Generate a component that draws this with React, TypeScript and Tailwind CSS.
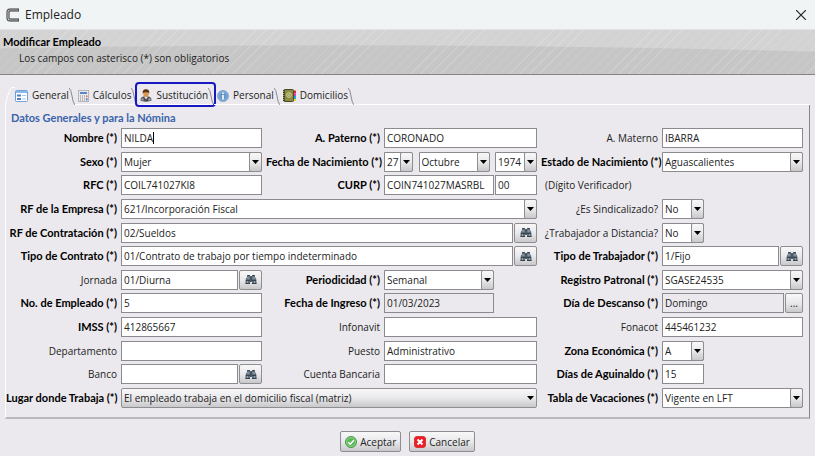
import type { ReactNode } from "react";
import { clsx } from "clsx";

const raised = "border border-[#8e8e90] rounded-xs bg-linear-to-b from-[#f8f8f9] via-[#e9e8ea] to-[#c9c8cb]";
const box = "h-5 w-full min-w-0 border border-[#8b8a8e] pl-[2px] text-[#222] outline-none";
const strong = "font-['Lato',sans-serif] text-[11px] font-bold";

type FieldProps = { id: string; value?: string; className?: string; readOnly?: boolean };

function TextBox({ id, value = "", className, readOnly }: FieldProps) {
  return (
    <input
      id={id}
      type="text"
      defaultValue={value}
      readOnly={readOnly}
      className={clsx(box, readOnly ? "bg-[#ebe9ed]" : "bg-white", className)}
    />
  );
}

function Combo({ id, value = "", className, flat, label }: FieldProps & { flat?: boolean; label?: string }) {
  return (
    <div className={clsx("relative h-5 min-w-0", className)}>
      <select
        id={id}
        aria-label={label}
        defaultValue={value}
        className={clsx(
          "h-5 w-full appearance-none pl-[2px] text-[#222] outline-none",
          flat ? raised : "border border-[#8b8a8e] bg-white rounded-r-xs",
        )}
      >
        <option>{value}</option>
      </select>
      <span
        className={clsx(
          "pointer-events-none absolute inset-y-0 right-0 flex w-[13px] items-center justify-center",
          !flat && raised,
        )}
      >
        <svg width="7" height="4" viewBox="0 0 7 4" className="shrink-0"><path d="M0 0h7L3.500 4z" fill="#000" /></svg>
      </span>
    </div>
  );
}

const Binoculars = () => (
  <svg width="12" height="11" viewBox="0 0 12 11">
    <path d="M2 1h3v1h2V1h3v2l1 1.500.5 2V10H7V8H5v2H.5V6.500l.5-2L2 3z" fill="#5f6e7b" />
    <path d="M2.500 1h2v1h-2zM7.500 1h2v1h-2z" fill="#3a444e" />
    <path d="M5.500 2.500h1V7.500h-1z" fill="#333c45" />
    <path d="M2 4h2.500M7.500 4H10" stroke="#a3b2bf" />
    <path d="M.5 9.500H5M7 9.500h4.500M1 6.500h4M7 6.500h4" stroke="#36414b" />
    <path d="M2.500 7v2M9.500 7v2" stroke="#93a2af" />
  </svg>
);

function Lookup({ id, value, children }: { id: string; value?: string; children?: ReactNode }) {
  return (
    <div className="flex w-full gap-px">
      <TextBox id={id} value={value} readOnly={!!children} />
      <button
        type="button"
        aria-label="Buscar"
        className={clsx(raised, "flex h-5 shrink-0 items-center justify-center", children ? "w-[18px]" : "w-[23px]")}
      >
        {children ?? <Binoculars />}
      </button>
    </div>
  );
}

function Label({ htmlFor, children, optional }: { htmlFor: string; children: ReactNode; optional?: boolean }) {
  return (
    <label htmlFor={htmlFor} className={clsx("text-right whitespace-nowrap", !optional && [strong, "text-black"])}>
      {children}
    </label>
  );
}

const FormIcon = () => (
  <svg width="13" height="12" viewBox="0 0 13 12">
    <rect x=".5" y=".5" width="12" height="11" rx="1" fill="#fff" stroke="#6f9fd8" />
    <path d="M1 1h11v2H1z" fill="#8db9ea" />
    <path d="M2 4.500h4v2H2zM2 8h4v2H2z" fill="#4f82c9" />
    <path d="M7 5.500h4M7 9h4" stroke="#a9c6ea" />
  </svg>
);

const CalcIcon = () => (
  <svg width="11" height="12" viewBox="0 0 11 12">
    <rect x=".5" y=".5" width="10" height="11" fill="#e9e9ea" stroke="#b5b5b8" />
    <path d="M2 2h7v2H2z" fill="#5c86c4" />
    <path d="M2 6h5M2 8h5M2 10h5" stroke="#8d8d92" strokeDasharray="1 1" />
    <path d="M8 5.500h1.500V7H8z" fill="#dd6a50" />
    <path d="M8 8h1.500v2.500H8z" fill="#5c86c4" />
  </svg>
);

const UserIcon = () => (
  <svg width="12" height="13" viewBox="0 0 12 13">
    <path d="M.5 11.500C.5 8 2.500 7.200 6 7.200s5.500.8 5.500 4.300c-2 1.500-9 1.500-11 0z" fill="#4b4d52" />
    <path d="M4 7.500h4L6 10.500z" fill="#e8e8e8" />
    <path d="M1 10.500l2-2 1 3H1zM11 10.500l-2-2-1 3h3z" fill="#9b9da1" />
    <ellipse cx="6" cy="4.700" rx="2.700" ry="3.200" fill="#d9974f" />
    <path d="M2.800 4.700C2.300 1.500 3.900.3 6 .3s3.700 1.200 3.200 4.400C8.500 3.300 7.500 3.500 6 3.300 4.500 3.500 3.500 3.300 2.800 4.700z" fill="#5a3213" />
  </svg>
);

const InfoIcon = () => (
  <svg width="12" height="12" viewBox="0 0 12 12">
    <circle cx="6" cy="6" r="5.500" fill="#6597c9" stroke="#86abd0" />
    <circle cx="6" cy="6" r="4.200" fill="none" stroke="#a9c8e6" strokeWidth=".6" />
    <path d="M5.200 2.500h1.600V4H5.200zM5.200 5h1.600v4.500H5.200z" fill="#fff" />
  </svg>
);

const BookIcon = () => (
  <svg width="13" height="13" viewBox="0 0 13 13">
    <path d="M10.500 1.500H13v3h-2.500z" fill="#e32832" />
    <path d="M10.500 4.500H13v2.500h-2.500z" fill="#d63fc2" />
    <path d="M10.500 7H13v3h-2.500z" fill="#27a6dc" />
    <path d="M10.500 10H13v2h-2.500z" fill="#f2d53b" />
    <rect x="1" y=".5" width="9.500" height="12" rx="1" fill="#8a8a45" stroke="#4b4a22" />
    <path d="M1 1v11" stroke="#3e3d22" strokeWidth="2" strokeDasharray="1 1" />
    <circle cx="6" cy="6" r="2.300" fill="none" stroke="#dcd793" />
    <circle cx="6" cy="6" r=".8" fill="#f0ebb5" />
  </svg>
);

const tabs = [
  { name: "General", icon: <FormIcon /> },
  { name: "Cálculos", icon: <CalcIcon /> },
  { name: "Sustitución", icon: <UserIcon />, marked: true },
  { name: "Personal", icon: <InfoIcon /> },
  { name: "Domicilios", icon: <BookIcon /> },
];

export default function App() {
  return (
    <div className="flex min-h-screen flex-col bg-[#ebe9ed] font-['Open_Sans','Noto_Sans',sans-serif] text-[10px] leading-4 text-[#222]">
      {/* Title bar */}
      <header className="flex h-[29px] items-center justify-between bg-[#f0f4f5] pr-2 pl-1.5">
        <div className="flex items-center gap-[5px]">
          <svg width="14" height="16" viewBox="0 0 14 16">
            <path d="M13 3H4Q2 3 2 5v6q0 2 2 2h9" fill="none" stroke="#333" strokeWidth="3" />
            <path d="M12.500 3H4Q2 3 2 5v6q0 2 2 2h8.500" fill="none" stroke="#c4c4c4" strokeWidth="1.200" />
          </svg>
          <span className="text-[12px]">Empleado</span>
        </div>
        <button type="button" aria-label="Cerrar" className="p-px">
          <svg width="10" height="10" viewBox="0 0 10 10"><path d="M0 0l10 10M10 0L0 10" stroke="#222" strokeWidth="1.200" /></svg>
        </button>
      </header>

      {/* Banner */}
      <section className="relative border-t border-b border-t-[#e2e2e3] border-b-[#858585] bg-[#d3d3d3] pt-1 pb-2">
        <svg className="absolute inset-0 h-full w-full" viewBox="0 0 815 45" preserveAspectRatio="none">
          <path d="M0 19Q400 11 815 22V45H0z" fill="#c6c6c6" />
        </svg>
        <div className="absolute inset-0 bg-[repeating-linear-gradient(135deg,transparent_0px,transparent_6px,#ffffff24_6px,#ffffff24_7px)]" />
        <h1 className={clsx(strong, "relative pl-[3px] text-black")}>Modificar Empleado</h1>
        <p className="relative pl-[19px]">Los campos con asterisco (*) son obligatorios</p>
      </section>

      {/* Tabs */}
      <nav role="tablist" className="mt-3 flex h-[18px] pl-[5px]">
        {tabs.map((tab, i) => (
          <button
            key={tab.name}
            type="button"
            role="tab"
            aria-selected={i === 0}
            className={clsx("relative flex items-center gap-1 whitespace-nowrap", i === 0 ? "pl-[10px]" : "border-b border-white pl-[3px]")}
          >
            {i === 0 && (
              <svg className="absolute top-0 left-0" width="10" height="18" viewBox="0 0 10 18">
                <path d="M.5 18Q4 1 7 .5h3" fill="none" stroke="#fff" />
              </svg>
            )}
            {tab.icon}
            <span className="flex">
              {tab.name}
              <svg width="6" height="18" viewBox="0 0 6 18"><path d="M0 1Q2 2 3 9t3 9" fill="none" stroke="#89888c" /></svg>
            </span>
            {tab.marked && <span className="absolute -inset-x-[2px] -top-[5px] -bottom-[3px] rounded-sm border-2 border-[#1717c4]" />}
          </button>
        ))}
        <span className="mr-[5px] flex-1 border-b border-white" />
      </nav>

      {/* General data */}
      <main className="mx-[5px] flex flex-1 flex-col border-r border-b-2 border-l border-r-[#858585] border-b-[#b9b8bc] border-l-white pt-[5px] pr-[6px] pb-[9px]">
        <h2 className={clsx(strong, "pl-[5px] text-[#3963ab]")}>Datos Generales y para la Nómina</h2>
        <form className="mt-[2px] grid flex-1 grid-cols-[111px_141fr_114px_153fr_117px_141fr] content-between items-center gap-x-1">
          <Label htmlFor="nombre">Nombre (*)</Label>
          <div className="relative">
            <TextBox id="nombre" value="NILDA" />
            <span className="absolute top-[4px] left-[32px] h-3 w-px bg-black" />
          </div>
          <Label htmlFor="paterno">A. Paterno (*)</Label>
          <TextBox id="paterno" value="CORONADO" />
          <Label htmlFor="materno" optional>A. Materno</Label>
          <TextBox id="materno" value="IBARRA" />

          <Label htmlFor="sexo">Sexo (*)</Label>
          <Combo id="sexo" value="Mujer" />
          <Label htmlFor="dia">Fecha de Nacimiento (*)</Label>
          <div className="flex justify-between">
            <Combo id="dia" value="27" className="w-[29px]" />
            <Combo id="mes" label="Mes" value="Octubre" className="w-[71px]" />
            <Combo id="anio" label="Año" value="1974" className="w-[42px]" />
          </div>
          <Label htmlFor="estado">Estado de Nacimiento (*)</Label>
          <Combo id="estado" value="Aguascalientes" />

          <Label htmlFor="rfc">RFC (*)</Label>
          <TextBox id="rfc" value="COIL741027KI8" />
          <Label htmlFor="curp">CURP (*)</Label>
          <div className="flex gap-px">
            <TextBox id="curp" value="COIN741027MASRBL" />
            <TextBox id="digito" value="00" className="max-w-[42px]" />
          </div>
          <label htmlFor="digito" className="col-span-2 pl-1">(Dígito Verificador)</label>

          <Label htmlFor="empresa">RF de la Empresa (*)</Label>
          <Combo id="empresa" value="621/Incorporación Fiscal" className="col-span-3" />
          <Label htmlFor="sindicalizado" optional>¿Es Sindicalizado?</Label>
          <Combo id="sindicalizado" value="No" className="w-[42px]" />

          <Label htmlFor="contratacion">RF de Contratación (*)</Label>
          <div className="col-span-3"><Lookup id="contratacion" value="02/Sueldos" /></div>
          <Label htmlFor="distancia" optional>¿Trabajador a Distancia?</Label>
          <Combo id="distancia" value="No" className="w-[42px]" />

          <Label htmlFor="contrato">Tipo de Contrato (*)</Label>
          <div className="col-span-3"><Lookup id="contrato" value="01/Contrato de trabajo por tiempo indeterminado" /></div>
          <Label htmlFor="trabajador">Tipo de Trabajador (*)</Label>
          <Lookup id="trabajador" value="1/Fijo" />

          <Label htmlFor="jornada" optional>Jornada</Label>
          <Lookup id="jornada" value="01/Diurna" />
          <Label htmlFor="periodicidad">Periodicidad (*)</Label>
          <Combo id="periodicidad" value="Semanal" className="w-[110px]" />
          <Label htmlFor="registro">Registro Patronal (*)</Label>
          <Combo id="registro" value="SGASE24535" />

          <Label htmlFor="numero">No. de Empleado (*)</Label>
          <TextBox id="numero" value="5" />
          <Label htmlFor="ingreso">Fecha de Ingreso (*)</Label>
          <TextBox id="ingreso" value="01/03/2023" readOnly className="max-w-[110px]" />
          <Label htmlFor="descanso">Día de Descanso (*)</Label>
          <Lookup id="descanso" value="Domingo">...</Lookup>

          <Label htmlFor="imss">IMSS (*)</Label>
          <TextBox id="imss" value="412865667" />
          <Label htmlFor="infonavit" optional>Infonavit</Label>
          <TextBox id="infonavit" />
          <Label htmlFor="fonacot" optional>Fonacot</Label>
          <TextBox id="fonacot" value="445461232" />

          <Label htmlFor="departamento" optional>Departamento</Label>
          <TextBox id="departamento" />
          <Label htmlFor="puesto" optional>Puesto</Label>
          <TextBox id="puesto" value="Administrativo" />
          <Label htmlFor="zona">Zona Económica (*)</Label>
          <Combo id="zona" value="A" className="w-[42px]" />

          <Label htmlFor="banco" optional>Banco</Label>
          <Lookup id="banco" />
          <Label htmlFor="cuenta" optional>Cuenta Bancaria</Label>
          <TextBox id="cuenta" />
          <Label htmlFor="aguinaldo">Días de Aguinaldo (*)</Label>
          <TextBox id="aguinaldo" value="15" className="max-w-[42px]" />

          <Label htmlFor="lugar">Lugar donde Trabaja (*)</Label>
          <Combo id="lugar" flat value="El empleado trabaja en el domicilio fiscal (matriz)" className="col-span-3" />
          <Label htmlFor="vacaciones">Tabla de Vacaciones (*)</Label>
          <Combo id="vacaciones" value="Vigente en LFT" />
        </form>
      </main>

      {/* Actions */}
      <footer className="flex justify-center gap-2 pt-3 pb-1">
        <button type="button" className={clsx(raised, "flex h-[21px] items-center gap-[3px] px-[4px]")}>
          <svg width="12" height="12" viewBox="0 0 12 12">
            <circle cx="6" cy="6" r="5.500" fill="#5cb85a" stroke="#439a45" />
            <circle cx="6" cy="6" r="4.500" fill="none" stroke="#a9dba4" strokeWidth=".7" />
            <path d="M3.300 6.200l2 2 3.500-4" fill="none" stroke="#fff" strokeWidth="1.600" />
          </svg>
          Aceptar
        </button>
        <button type="button" className={clsx(raised, "flex h-[21px] items-center gap-[3px] px-[4px]")}>
          <svg width="12" height="12" viewBox="0 0 12 12">
            <rect x=".5" y=".5" width="11" height="11" rx="2.500" fill="#ee1c25" stroke="#d8343a" />
            <path d="M3.500 3.500l5 5M8.500 3.500l-5 5" stroke="#fff" strokeWidth="2" />
          </svg>
          Cancelar
        </button>
      </footer>
    </div>
  );
}
